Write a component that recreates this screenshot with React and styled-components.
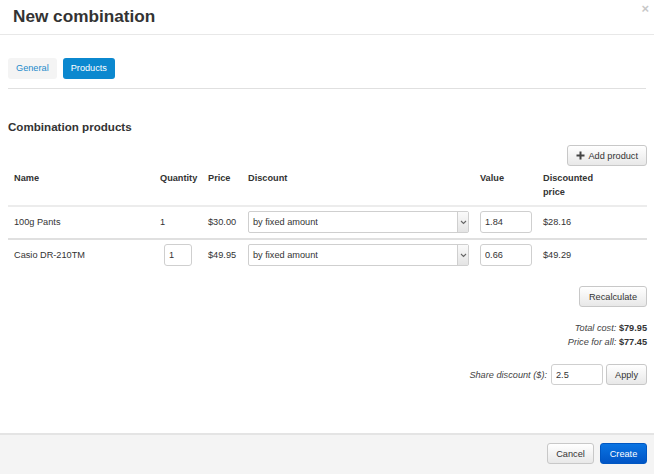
import React from "react";
import styled, { createGlobalStyle } from "styled-components";

const Global = createGlobalStyle`
  html, body { margin: 0; padding: 0; background: #fff; }
  body { font-family: "Liberation Sans", Arial, sans-serif; color: #333; font-size: 9.2px; }
  * { box-sizing: border-box; }
`;

const Modal = styled.div`
  width: 654px;
  height: 474px;
  display: flex;
  flex-direction: column;
  background: #fff;
`;

const Header = styled.div`
  height: 35px;
  flex: none;
  display: flex;
  justify-content: space-between;
  align-items: flex-start;
  padding: 0 5px 0 13px;
  border-bottom: 1px solid #e8e8e8;
`;

const Title = styled.h1`
  margin: 0;
  font-size: 17.2px;
  line-height: 33px;
  font-weight: bold;
  color: #333;
`;

const Close = styled.span`
  font-size: 13px;
  line-height: 14px;
  color: #c8c8c8;
  margin-top: 2px;
  font-weight: bold;
`;

const Body = styled.div`
  flex: 1;
  padding: 23px 7px 0 8px;
  display: flex;
  flex-direction: column;
`;

const Tabs = styled.div`
  display: flex;
  gap: 6px;
  padding-bottom: 9px;
  border-bottom: 1px solid #e0e0e0;
  margin-right: 1px;
`;

const Tab = styled.div`
  height: 21px;
  line-height: 21px;
  padding: 0 8px;
  border-radius: 3px;
  font-size: 9.2px;
  background: ${(p) => (p.$active ? "#0b88cf" : "#f4f4f4")};
  color: ${(p) => (p.$active ? "#fff" : "#1e8acb")};
`;

const SectionTitle = styled.h2`
  margin: 31px 0 0 0;
  font-size: 11.6px;
  line-height: 14px;
  font-weight: bold;
  color: #333;
`;

const RightRow = styled.div`
  display: flex;
  justify-content: flex-end;
  align-items: center;
  gap: ${(p) => p.$gap || 0}px;
  margin-top: ${(p) => p.$mt || 0}px;
`;

const Button = styled.button`
  font-family: "Liberation Sans", Arial, sans-serif;
  font-size: 9.2px;
  height: 21px;
  padding: 0 ${(p) => p.$px || 8}px;
  border-radius: 3px;
  border: 1px solid ${(p) => (p.$primary ? "#0057c2" : "#c8c8c8")};
  background: ${(p) =>
    p.$primary
      ? "linear-gradient(#0a74e2, #0055c6)"
      : "linear-gradient(#ffffff, #e8e8e8)"};
  color: ${(p) => (p.$primary ? "#fff" : "#333")};
  display: inline-flex;
  align-items: center;
  justify-content: center;
  gap: 3px;
  width: ${(p) => (p.$w ? p.$w + "px" : "auto")};
  cursor: pointer;
`;

const Table = styled.table`
  width: 100%;
  border-collapse: collapse;
  margin-top: 3px;
  table-layout: fixed;
`;

const Th = styled.th`
  text-align: left;
  font-weight: bold;
  font-size: 9.2px;
  line-height: 14px;
  padding: 2px 6px 6px;
  vertical-align: top;
  color: #333;
`;

const Tr = styled.tr`
  border-top: 2px solid ${(p) => (p.$first ? "#ececec" : "#e0e0e0")};
`;

const Td = styled.td`
  padding: 4px 6px 5px;
  height: 31px;
  vertical-align: middle;
  font-size: 9.2px;
  text-align: ${(p) => (p.$center ? "center" : "left")};
  color: #333;
`;

const Input = styled.input`
  font-family: "Liberation Sans", Arial, sans-serif;
  font-size: 9.2px;
  color: #333;
  height: ${(p) => p.$h || 22}px;
  width: ${(p) => p.$w}px;
  border: 1px solid #cfcfcf;
  border-radius: 3px;
  padding: 0 4px;
  outline: none;
  background: #fff;
  vertical-align: middle;
`;

const SelectBox = styled.div`
  height: 22px;
  width: 221px;
  border: 1px solid #cfcfcf;
  border-radius: 2px;
  display: flex;
  align-items: stretch;
  background: #fff;
`;

const SelectText = styled.div`
  flex: 1;
  padding-left: 4px;
  display: flex;
  align-items: center;
`;

const SelectArrow = styled.div`
  width: 11px;
  border-left: 1px solid #cfcfcf;
  background: linear-gradient(#fafafa, #e4e4e4);
  display: flex;
  align-items: center;
  justify-content: center;
`;

const Totals = styled.div`
  margin-top: 14px;
  text-align: right;
  line-height: 14px;
  font-size: 9.2px;
`;

const Label = styled.em`
  font-style: italic;
  color: #444;
`;

const Footer = styled.div`
  flex: none;
  height: 41px;
  border-top: 2px solid #e4e4e4;
  background: #f4f4f4;
  display: flex;
  justify-content: flex-end;
  align-items: flex-start;
  gap: 6px;
  padding: 8px 7px 0 0;
`;

const Chevron = () => (
  <svg width="7" height="5" viewBox="0 0 7 5">
    <path d="M1 1 L3.5 3.5 L6 1" fill="none" stroke="#666" strokeWidth="1.1" />
  </svg>
);

const Plus = () => (
  <svg width="9" height="9" viewBox="0 0 9 9">
    <rect x="3.5" y="0.5" width="2" height="8" fill="#444" />
    <rect x="0.5" y="3.5" width="8" height="2" fill="#444" />
  </svg>
);

const rows = [
  { name: "100g Pants", qty: "1", editable: false, price: "$30.00", value: "1.84", disc: "$28.16" },
  { name: "Casio DR-210TM", qty: "1", editable: true, price: "$49.95", value: "0.66", disc: "$49.29" },
];

export default function App() {
  return (
    <>
      <Global />
      <Modal>
        <Header>
          <Title>New combination</Title>
          <Close>×</Close>
        </Header>
        <Body>
          <Tabs>
            <Tab>General</Tab>
            <Tab $active>Products</Tab>
          </Tabs>
          <SectionTitle>Combination products</SectionTitle>
          <RightRow $mt={11}>
            <Button $px={8}>
              <Plus />
              Add product
            </Button>
          </RightRow>
          <Table>
            <colgroup>
              <col style={{ width: 146 }} />
              <col style={{ width: 48 }} />
              <col style={{ width: 40 }} />
              <col style={{ width: 232 }} />
              <col style={{ width: 63 }} />
              <col />
            </colgroup>
            <thead>
              <tr>
                <Th>Name</Th>
                <Th>Quantity</Th>
                <Th>Price</Th>
                <Th>Discount</Th>
                <Th>Value</Th>
                <Th>
                  Discounted
                  <br />
                  price
                </Th>
              </tr>
            </thead>
            <tbody>
              {rows.map((r, i) => (
                <Tr key={r.name} $first={i === 0}>
                  <Td>{r.name}</Td>
                  <Td $center={r.editable}>
                    {r.editable ? <Input $w={28} $h={22} defaultValue={r.qty} /> : r.qty}
                  </Td>
                  <Td>{r.price}</Td>
                  <Td>
                    <SelectBox>
                      <SelectText>by fixed amount</SelectText>
                      <SelectArrow>
                        <Chevron />
                      </SelectArrow>
                    </SelectBox>
                  </Td>
                  <Td>
                    <Input $w={52} defaultValue={r.value} />
                  </Td>
                  <Td>{r.disc}</Td>
                </Tr>
              ))}
            </tbody>
          </Table>
          <RightRow $mt={15}>
            <Button $w={68}>Recalculate</Button>
          </RightRow>
          <Totals>
            <div>
              <Label>Total cost:</Label> <b>$79.95</b>
            </div>
            <div>
              <Label>Price for all:</Label> <b>$77.45</b>
            </div>
          </Totals>
          <RightRow $mt={15} $gap={3}>
            <Label>Share discount ($):</Label>
            <Input $w={52} $h={21} defaultValue="2.5" style={{ marginLeft: 1 }} />
            <Button $w={41}>Apply</Button>
          </RightRow>
        </Body>
        <Footer>
          <Button $w={47}>Cancel</Button>
          <Button $w={47} $primary>
            Create
          </Button>
        </Footer>
      </Modal>
    </>
  );
}
